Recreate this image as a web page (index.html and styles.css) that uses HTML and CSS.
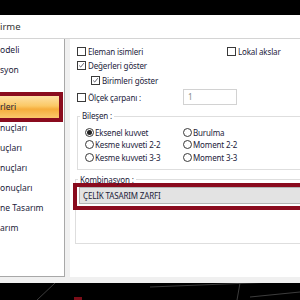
FILE: index.html
```html
<!DOCTYPE html>
<html lang="tr">
<head>
    <meta charset="UTF-8">
    <meta name="viewport" content="width=device-width, initial-scale=1.0">
    <title>Görselleştirme</title>
    <link rel="stylesheet" href="styles.css">
</head>
<body>
    <div class="screen">
        <div class="topbar"></div>
        <div class="titlebar">irme</div>

        <div class="dialog">
            <ul class="nav">
                <li>odeli</li>
                <li>syon</li>
                <li class="nav-gap"></li>
                <li class="selected">rleri</li>
                <li>nuçları</li>
                <li>uçları</li>
                <li>nuçları</li>
                <li>onuçları</li>
                <li>ne Tasarım</li>
                <li>arım</li>
            </ul>

            <div class="content">
                <div class="row">
                    <label class="check wide"><span class="box"></span>Eleman isimleri</label>
                    <label class="check"><span class="box"></span>Lokal akslar</label>
                </div>
                <div class="row">
                    <label class="check"><span class="box"><svg viewBox="0 0 9 9"><polyline points="1.5,4.5 3.5,6.5 7.5,1.5"></polyline></svg></span>Değerleri göster</label>
                </div>
                <div class="row row-sub">
                    <label class="check"><span class="box"><svg viewBox="0 0 9 9"><polyline points="1.5,4.5 3.5,6.5 7.5,1.5"></polyline></svg></span>Birimleri göster</label>
                </div>
                <div class="row row-scale">
                    <label class="check wide-scale"><span class="box"></span>Ölçek çarpanı :</label>
                    <div class="input">1</div>
                </div>

                <fieldset class="group bilesen">
                    <legend>Bileşen :</legend>
                    <div class="radios">
                        <label class="radio"><span class="dot on"></span>Eksenel kuvvet</label>
                        <label class="radio"><span class="dot"></span>Burulma</label>
                        <label class="radio"><span class="dot"></span>Kesme kuvveti 2-2</label>
                        <label class="radio"><span class="dot"></span>Moment 2-2</label>
                        <label class="radio"><span class="dot"></span>Kesme kuvveti 3-3</label>
                        <label class="radio"><span class="dot"></span>Moment 3-3</label>
                    </div>
                </fieldset>

                <fieldset class="group kombinasyon">
                    <legend>Kombinasyon :</legend>
                    <div class="highlight">
                        <div class="combo">ÇELİK TASARIM ZARFI</div>
                    </div>
                </fieldset>
            </div>
        </div>

        <div class="footer">
            <svg width="300" height="17" viewBox="0 283 300 17">
                <line x1="37" y1="300" x2="55" y2="283" class="edge"></line>
                <line x1="150" y1="287" x2="300" y2="281" class="edge"></line>
                <line x1="240" y1="283" x2="237" y2="300" class="edge"></line>
                <line x1="250" y1="297" x2="300" y2="292" class="edge"></line>
                <rect x="74" y="297" width="8" height="3" fill="#7a0d18"></rect>
            </svg>
        </div>
    </div>
</body>
</html>
```

FILE: styles.css
```css
body {
    margin: 0;
    width: 300px;
    height: 300px;
    overflow: hidden;
    background-color: #000;
    font-family: "Noto Sans", "Open Sans", sans-serif;
    font-size: 8px;
    letter-spacing: -0.15px;
    color: #22223a;
}
.screen {
    display: flex;
    flex-direction: column;
    height: 300px;
}
.topbar {
    height: 15px;
    background-color: #000;
}
.titlebar {
    height: 23px;
    line-height: 23px;
    background-color: #fff;
    border-bottom: 1px solid #d4d4d4;
    font-size: 9.5px;
    letter-spacing: 0;
    color: #333;
}
.dialog {
    display: flex;
    height: 238px;
    padding-bottom: 6px;
    background-color: #f0f0f0;
}

/* left navigation list */
.nav {
    width: 64px;
    margin: 0;
    padding: 1px 0 0;
    list-style: none;
    background-color: #fff;
    border-right: 1px solid #a8a8a8;
    border-bottom: 1px solid #a8a8a8;
    overflow: hidden;
    font-size: 8.5px;
    letter-spacing: 0;
}
.nav li {
    height: 20px;
    line-height: 20px;
    white-space: nowrap;
}
.nav .nav-gap {
    height: 12px;
}
.nav .selected {
    box-sizing: border-box;
    height: 30px;
    line-height: 22px;
    margin: 0 1px -4px -4px;
    border: 4px solid #8a0b1e;
    background: linear-gradient(#fde0a6, #fbc865 45%, #f6ad3c 60%, #fbc86c);
}

/* right options panel */
.content {
    flex: 1;
    margin-left: 5px;
    padding: 5px 0 0 7px;
    background-color: #fff;
    overflow: hidden;
}
.row {
    display: flex;
    align-items: center;
    height: 14px;
}
.row-sub {
    height: 16px;
    padding-left: 14px;
}
.row-scale {
    height: 18px;
}
.check, .radio {
    display: flex;
    align-items: center;
    white-space: nowrap;
}
.wide {
    width: 150px;
}
.wide-scale {
    width: 106px;
}
.box {
    box-sizing: border-box;
    width: 9px;
    height: 9px;
    margin-right: 2px;
    border: 1px solid #3a3a3a;
    background-color: #fff;
}
.box svg {
    display: block;
    width: 7px;
    height: 7px;
    fill: none;
    stroke: #3a3a4a;
    stroke-width: 1;
}
.input {
    box-sizing: border-box;
    width: 54px;
    height: 16px;
    line-height: 14px;
    padding-left: 4px;
    border: 1px solid #d2d2d2;
    color: #8a8a8a;
}

.group {
    margin: 5px -20px 0 0;
    border: 1px solid #dedede;
    padding: 0;
}
.group legend {
    line-height: 10px;
    padding: 0 2px;
}
.bilesen {
    padding: 5px 0 5px 7px;
}
.bilesen legend {
    margin-left: -5px;
}
.radios {
    display: grid;
    grid-template-columns: 98px auto;
    grid-auto-rows: 12.5px;
}
.dot {
    box-sizing: border-box;
    display: flex;
    align-items: center;
    justify-content: center;
    width: 9px;
    height: 9px;
    margin-right: 1px;
    border: 1px solid #3a3a3a;
    border-radius: 50%;
    background-color: #fff;
}
.dot.on::after {
    content: "";
    width: 5px;
    height: 5px;
    border-radius: 50%;
    background-color: #222;
}

.kombinasyon {
    margin-left: -2px;
    padding-bottom: 33px;
}
.kombinasyon legend {
    margin-left: 2px;
}
.highlight {
    margin: -2px 0 0 -3px;
    padding: 0 0 2px 2px;
    border: 4px solid #8a0b1e;
}
.combo {
    box-sizing: border-box;
    height: 17px;
    line-height: 15px;
    padding-left: 3px;
    border: 1px solid #b4b4b4;
    background-color: #e3e3e3;
    white-space: nowrap;
}

.footer {
    height: 17px;
    background-color: #000;
}
.footer svg {
    display: block;
}
.edge {
    stroke: #3c3c3c;
    stroke-width: 1;
}
```
